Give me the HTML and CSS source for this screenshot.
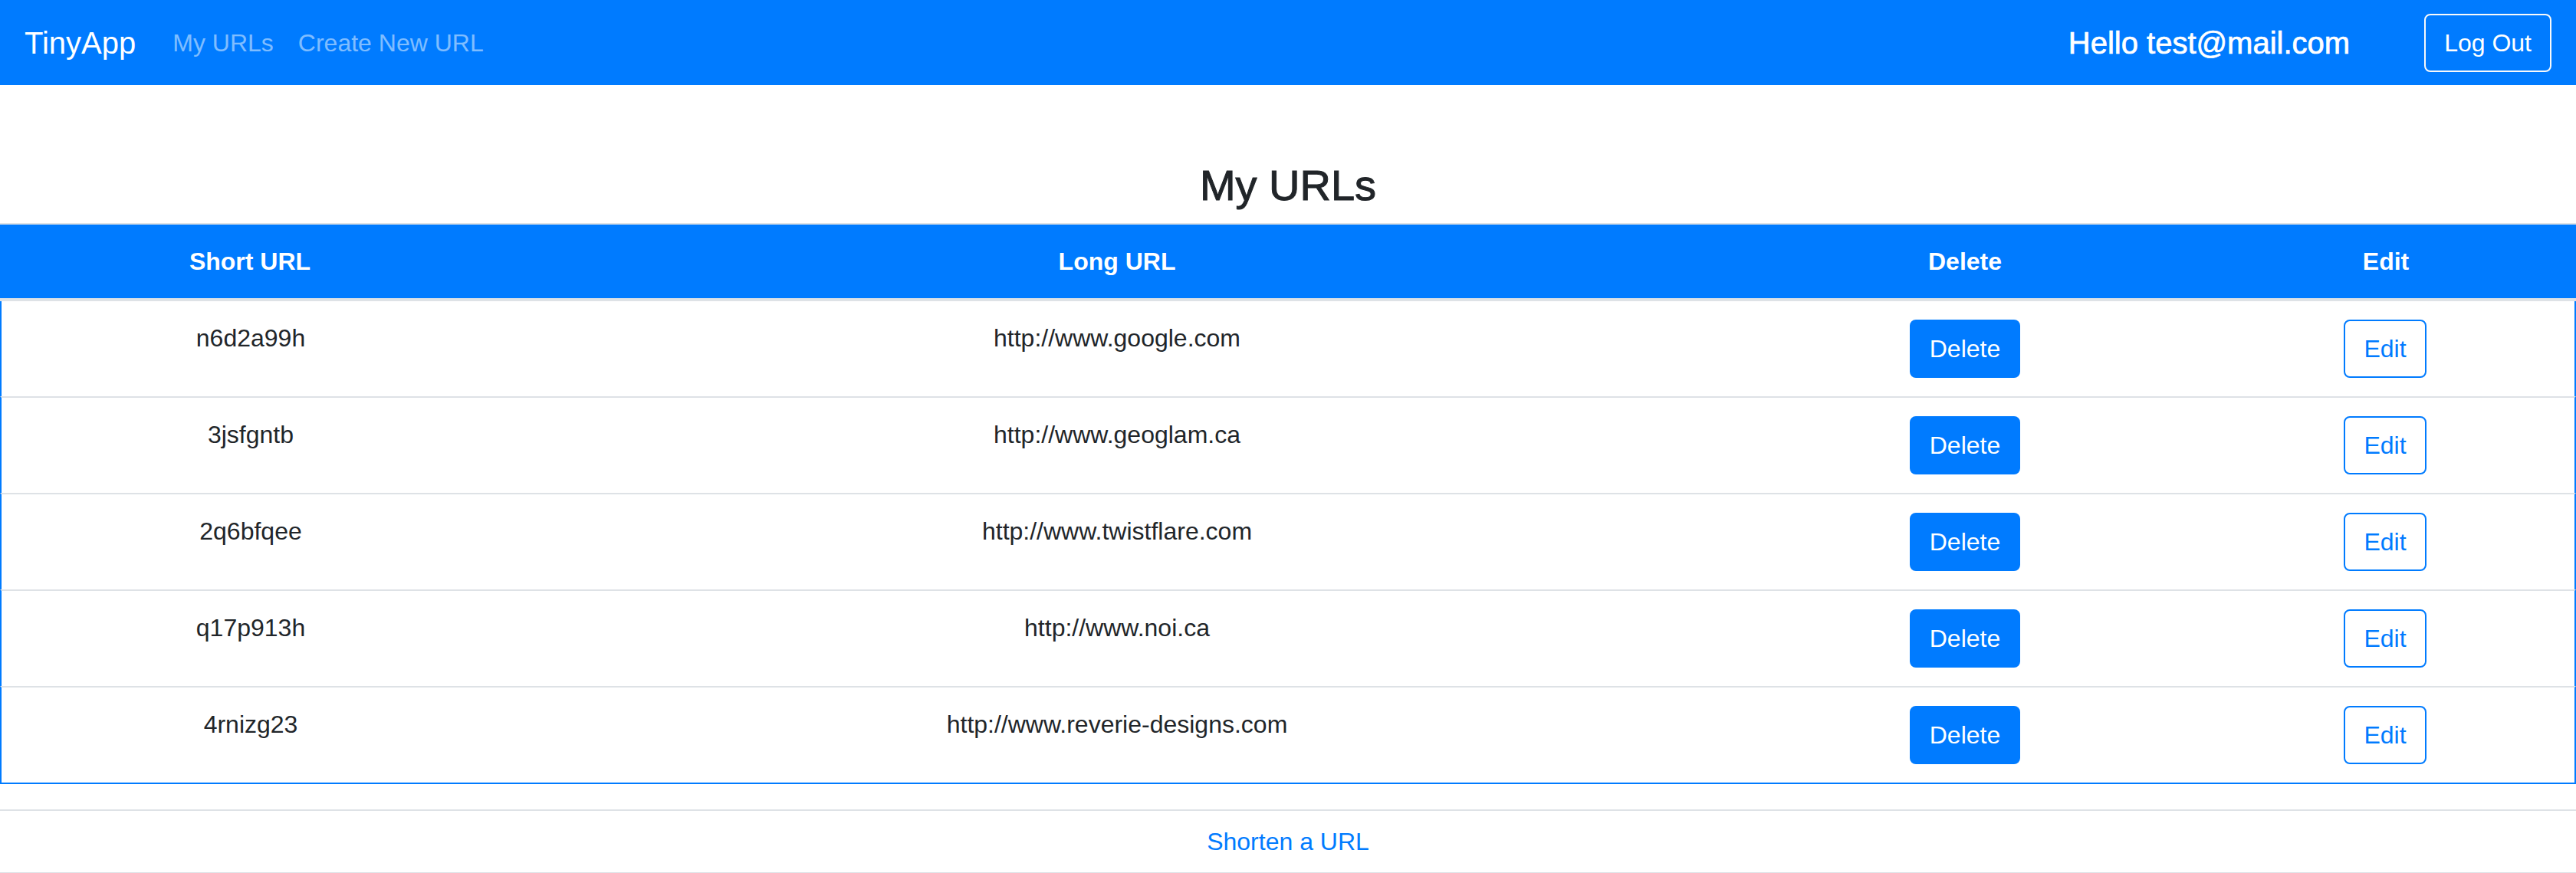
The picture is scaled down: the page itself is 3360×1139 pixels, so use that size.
FILE: index.html
```html
<!DOCTYPE html>
<html lang="en">
<head>
<meta charset="utf-8">
<title>TinyApp</title>
<link rel="stylesheet" href="styles.css">
</head>
<body>
<nav class="navbar">
  <a class="brand" href="#">TinyApp</a>
  <ul class="nav-links">
    <li><a class="nav-link" href="#">My URLs</a></li>
    <li><a class="nav-link" href="#">Create New URL</a></li>
  </ul>
  <div class="nav-right">
    <h5 class="greeting">Hello test@mail.com</h5>
    <button class="btn btn-outline-light">Log Out</button>
  </div>
</nav>
<main class="content">
  <h3 class="title">My URLs</h3>
  <table class="urls">
    <colgroup>
      <col class="col-short">
      <col class="col-long">
      <col class="col-delete">
      <col class="col-edit">
    </colgroup>
    <thead>
      <tr><th>Short URL</th><th>Long URL</th><th>Delete</th><th>Edit</th></tr>
    </thead>
    <tbody>
      <tr><td>n6d2a99h</td><td>http://www.google.com</td><td><button class="btn btn-primary">Delete</button></td><td><button class="btn btn-outline-primary">Edit</button></td></tr>
      <tr><td>3jsfgntb</td><td>http://www.geoglam.ca</td><td><button class="btn btn-primary">Delete</button></td><td><button class="btn btn-outline-primary">Edit</button></td></tr>
      <tr><td>2q6bfqee</td><td>http://www.twistflare.com</td><td><button class="btn btn-primary">Delete</button></td><td><button class="btn btn-outline-primary">Edit</button></td></tr>
      <tr><td>q17p913h</td><td>http://www.noi.ca</td><td><button class="btn btn-primary">Delete</button></td><td><button class="btn btn-outline-primary">Edit</button></td></tr>
      <tr><td>4rnizg23</td><td>http://www.reverie-designs.com</td><td><button class="btn btn-primary">Delete</button></td><td><button class="btn btn-outline-primary">Edit</button></td></tr>
    </tbody>
  </table>
  <div class="footer-link">
    <a href="#">Shorten a URL</a>
  </div>
</main>
</body>
</html>
```
FILE: styles.css
```css
* { box-sizing: border-box; }

body {
  margin: 0;
  font-family: "Liberation Sans", Arial, sans-serif;
  font-size: 32px;
  line-height: 1.5;
  color: #212529;
  background: #fff;
}

a { text-decoration: none; }

.navbar {
  display: flex;
  align-items: center;
  height: 111px;
  padding: 0 32px;
  background: #007bff;
}

.brand {
  font-size: 40px;
  line-height: 60px;
  color: #fff;
  margin-right: 32px;
}

.nav-links {
  display: flex;
  list-style: none;
  margin: 0;
  padding: 0;
  flex: 1;
}

.nav-link {
  display: block;
  padding: 16px;
  line-height: 48px;
  color: rgba(255, 255, 255, 0.5);
}

.nav-right {
  display: flex;
  align-items: center;
}

.greeting {
  margin: 0 97px 0 0;
  font-size: 40px;
  font-weight: 500;
  line-height: 48px;
  color: #fff;
  -webkit-text-stroke: 0.7px currentColor;
}

.btn {
  display: inline-block;
  vertical-align: top;
  font-family: inherit;
  font-size: 32px;
  line-height: 48px;
  padding: 12px 24px;
  border: 2px solid transparent;
  border-radius: 8px;
  cursor: pointer;
}

.btn-outline-light {
  background: transparent;
  color: #fff;
  border-color: #f8f9fa;
}

.btn-primary {
  background: #007bff;
  border-color: #007bff;
  color: #fff;
}

.btn-outline-primary {
  background: #fff;
  border-color: #007bff;
  color: #007bff;
}

.title {
  margin: 97px 0 16px;
  font-size: 56px;
  font-weight: 500;
  line-height: 67px;
  text-align: center;
  -webkit-text-stroke: 1px currentColor;
}

.urls {
  width: 100%;
  table-layout: fixed;
  border-collapse: separate;
  border-spacing: 0;
  text-align: center;
}

.col-short { width: 652px; }
.col-long { width: 1610px; }
.col-delete { width: 602px; }
.col-edit { width: 496px; }

.urls th {
  background: #007bff;
  color: #fff;
  font-weight: 700;
  padding: 24px;
  line-height: 48px;
  border-top: 2px solid #dee2e6;
  border-bottom: 4px solid #dee2e6;
  vertical-align: bottom;
}

.urls td {
  padding: 24px;
  line-height: 48px;
  vertical-align: top;
}

.urls tbody tr + tr td {
  border-top: 2px solid #dee2e6;
}

.urls tbody td:first-child { border-left: 2px solid #007bff; }
.urls tbody td:last-child { border-right: 2px solid #007bff; }
.urls tbody tr:last-child td { border-bottom: 2px solid #007bff; }

.footer-link {
  margin-top: 33px;
  border-top: 2px solid #dee2e6;
  border-bottom: 2px solid #dee2e6;
  line-height: 80px;
  text-align: center;
}

.footer-link a { color: #007bff; }
```
